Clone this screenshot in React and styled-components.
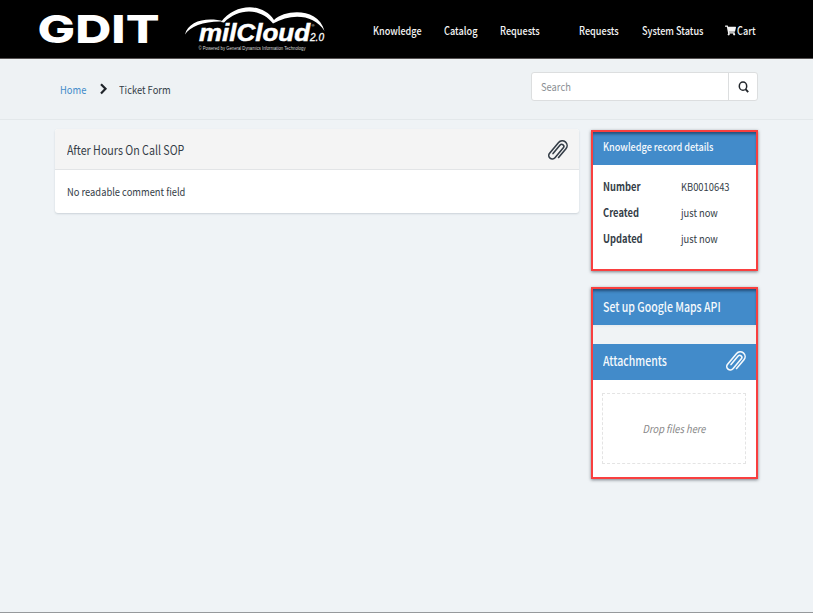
import React from "react";
import styled, { createGlobalStyle } from "styled-components";
import { FaShoppingCart } from "react-icons/fa";

const Global = createGlobalStyle`
  *{box-sizing:border-box}
  body{margin:0;background:#eff3f6;font-family:"Noto Sans CJK SC","Noto Sans",sans-serif;font-size:11px;color:#343d47}
`;

const Page = styled.div`
  height: 613px;
  overflow: hidden;
  display: flex;
  flex-direction: column;
  border-bottom: 1px solid #96999c;
`;

const Header = styled.header`
  height: 59px;
  flex: none;
  display: flex;
  background: #000;
  border-bottom: 1px solid #565252;
  padding-left: 36px;
`;

const Brand = styled.svg`
  width: 292px;
  height: 58px;
  flex: none;
`;

const Nav = styled.nav`
  display: flex;
  align-items: center;
  height: 60px;
  margin-left: 45px;
`;

const NavItem = styled.a`
  display: flex;
  align-items: center;
  gap: 1px;
  flex: none;
  width: ${(p) => p.$w}px;
  color: #f4f4f4;
  font-weight: 500;
`;

const Text = styled.span`
  display: inline-block;
  white-space: nowrap;
  line-height: 16px;
  font-size: ${(p) => p.$size || 11}px;
  transform: scaleX(${(p) => p.$squeeze || 0.85});
  transform-origin: ${(p) => p.$origin || "left"} center;
`;

const SubBar = styled.div`
  height: 61px;
  flex: none;
  display: flex;
  justify-content: space-between;
  align-items: flex-start;
  background: #eef2f4;
  border-bottom: 1px solid #e3e8ea;
  padding: 13px 55px 0 60px;
`;

const Crumbs = styled.div`
  display: flex;
  align-items: center;
  height: 33px;
`;

const HomeLink = styled.a`
  width: 39px;
  color: #428bca;
`;

const Chevron = styled.svg`
  width: 9px;
  height: 12px;
  margin-right: 11px;
`;

const SearchBox = styled.div`
  display: flex;
  width: 227px;
  height: 29px;
  background: #fff;
  border: 1px solid #dcdedf;
  border-radius: 3px;
`;

const SearchField = styled.div`
  flex: 1;
  display: flex;
  align-items: center;
  padding: 0 0 2px 9px;
  color: #8b8f94;
  border-right: 1px solid #dcdedf;
`;

const SearchButton = styled.div`
  width: 28px;
  display: grid;
  place-items: center;
  color: #22262b;
`;

const Lens = styled.svg`
  width: 11px;
  height: 12px;
`;

const Main = styled.main`
  display: flex;
  align-items: flex-start;
  padding: 9px 0 0 55px;
`;

const Article = styled.section`
  width: 524px;
  height: 84px;
  margin-right: 12px;
  background: #fff;
  border-radius: 3px;
  overflow: hidden;
  box-shadow: 0 1px 2px rgba(60, 80, 95, 0.2);
`;

const ArticleHead = styled.div`
  height: 41px;
  display: flex;
  align-items: center;
  justify-content: space-between;
  padding: 1px 11px 0 12px;
  background: #f4f4f4;
  border-bottom: 1px solid #e2e4e6;
`;

const ArticleBody = styled.div`
  height: 43px;
  display: flex;
  align-items: center;
  padding: 0 0 2px 12px;
`;

const Clip = styled.svg`
  width: 20px;
  height: 22px;
  flex: none;
`;

const Side = styled.aside`
  display: flex;
  flex-direction: column;
  gap: 16px;
  padding-top: 1px;
`;

const Callout = styled.section`
  width: 167px;
  height: ${(p) => p.$h}px;
  border: 2px solid #f93f3f;
  background: #fff;
  box-shadow: 0 1px 3px rgba(40, 50, 60, 0.6);
`;

const BlueBar = styled.div`
  height: ${(p) => p.$h}px;
  display: flex;
  align-items: center;
  justify-content: space-between;
  padding: 0 10px ${(p) => p.$lift || 0}px 10px;
  color: #f5f9fc;
  font-weight: 500;
  background: #428bca;
  box-shadow: ${(p) => (p.$top ? "inset 0 3px 3px -1px rgba(20, 45, 75, .65)" : "none")};
`;

const Gap = styled.div`
  height: 19px;
  background: linear-gradient(#e7ebee, #f0f3f5 3px);
`;

const Details = styled.dl`
  margin: 0;
  padding: 8px 0 0 10px;
  display: grid;
  grid-template-columns: 78px 1fr;
  grid-auto-rows: 26px;
  align-items: center;
`;

const Term = styled.dt`
  font-weight: 700;
`;

const Value = styled.dd`
  margin: 0;
`;

const DropZone = styled.div`
  height: 71px;
  margin: 13px 10px 0 9px;
  padding-bottom: 1px;
  border: 1px dashed #e4e4e4;
  display: grid;
  place-items: center;
  color: #888;
  font-style: italic;
`;

const ClipIcon = () => (
  <Clip viewBox="-10 -11 20 22" fill="none" stroke="currentColor" strokeWidth="1.6" strokeLinecap="round">
    <path
      transform="translate(.1 .6) rotate(40)"
      d="M4.800 5V-6.500A4.800 4.800 0 0 0-4.800-6.500V7.500A3.500 3.500 0 0 0 2.200 7.500V-5.500A2.100 2.100 0 0 0-2-5.500V5.500"
    />
  </Clip>
);

const navItems = [
  ["Knowledge", 71, 0.825],
  ["Catalog", 56, 0.835],
  ["Requests", 79, 0.83],
  ["Requests", 63, 0.83],
  ["System Status", 83, 0.83],
];

const details = [
  ["Number", "KB0010643"],
  ["Created", "just now"],
  ["Updated", "just now"],
];

export default function App() {
  return (
    <Page>
      <Global />
      <Header>
        <Brand viewBox="36 0 292 58" fill="#fff">
          <text x="37.500" y="42.800" fontFamily="Inter" fontWeight="800" fontSize="38.500" textLength="122" lengthAdjust="spacingAndGlyphs">GDIT</text>
          <path d="M185 34.500C188 21 207 16.500 224 21.500C206 20.500 190 26 185 34.500Z" />
          <path d="M221 22C235 3.500 262 2 274 20C285 9.500 318 7 324.500 31C314 14 291 13 273 23.500C261 8 239 7.500 224 22.500Z" />
          <text x="199" y="41" fontFamily="Liberation Sans" fontWeight="700" fontStyle="italic" fontSize="23.500" stroke="#fff" strokeWidth=".5" textLength="111" lengthAdjust="spacingAndGlyphs">milCloud</text>
          <text x="310" y="41" fontFamily="Liberation Sans" fontStyle="italic" fontSize="11.500" stroke="#fff" strokeWidth=".3" textLength="14" lengthAdjust="spacingAndGlyphs">2.0</text>
          <text x="311.500" y="27" fontFamily="Liberation Sans" fontSize="4">®</text>
          <text x="198.500" y="50.300" fill="#ddd" fontFamily="Liberation Sans" fontSize="4.800" textLength="107" lengthAdjust="spacingAndGlyphs">© Powered by General Dynamics Information Technology</text>
        </Brand>
        <Nav>
          {navItems.map(([label, w, s], i) => (
            <NavItem key={i} $w={w}><Text $squeeze={s}>{label}</Text></NavItem>
          ))}
          <NavItem $w={40}><FaShoppingCart size={11} /><Text $squeeze={0.83}>Cart</Text></NavItem>
        </Nav>
      </Header>
      <SubBar>
        <Crumbs>
          <HomeLink><Text>Home</Text></HomeLink>
          <Chevron viewBox="0 0 9 12" fill="none" stroke="#1f2429" strokeWidth="2.2">
            <path d="M2 1.200 6.500 5.800 2 10.400" />
          </Chevron>
          <Text>Ticket Form</Text>
        </Crumbs>
        <SearchBox>
          <SearchField><Text>Search</Text></SearchField>
          <SearchButton>
            <Lens viewBox="0 0 11 12" fill="none" stroke="currentColor" strokeWidth="1.500">
              <ellipse cx="5" cy="5.200" rx="3.700" ry="4.100" />
              <path d="M7.500 8.200 10.200 11.200" strokeWidth="1.900" />
            </Lens>
          </SearchButton>
        </SearchBox>
      </SubBar>
      <Main>
        <Article>
          <ArticleHead><Text $size={13} $squeeze={0.82}>After Hours On Call SOP</Text><ClipIcon /></ArticleHead>
          <ArticleBody><Text>No readable comment field</Text></ArticleBody>
        </Article>
        <Side>
          <Callout $h={141}>
            <BlueBar $h={33} $lift={5} $top><Text $squeeze={0.83}>Knowledge record details</Text></BlueBar>
            <Details>
              {details.map(([term, value]) => (
                <React.Fragment key={term}>
                  <Term><Text>{term}</Text></Term>
                  <Value><Text>{value}</Text></Value>
                </React.Fragment>
              ))}
            </Details>
          </Callout>
          <Callout $h={192}>
            <BlueBar $h={36} $top><Text $size={13} $squeeze={0.81}>Set up Google Maps API</Text></BlueBar>
            <Gap />
            <BlueBar $h={36} $lift={2}><Text $size={13} $squeeze={0.81}>Attachments</Text><ClipIcon /></BlueBar>
            <DropZone><Text $origin="center">Drop files here</Text></DropZone>
          </Callout>
        </Side>
      </Main>
    </Page>
  );
}
